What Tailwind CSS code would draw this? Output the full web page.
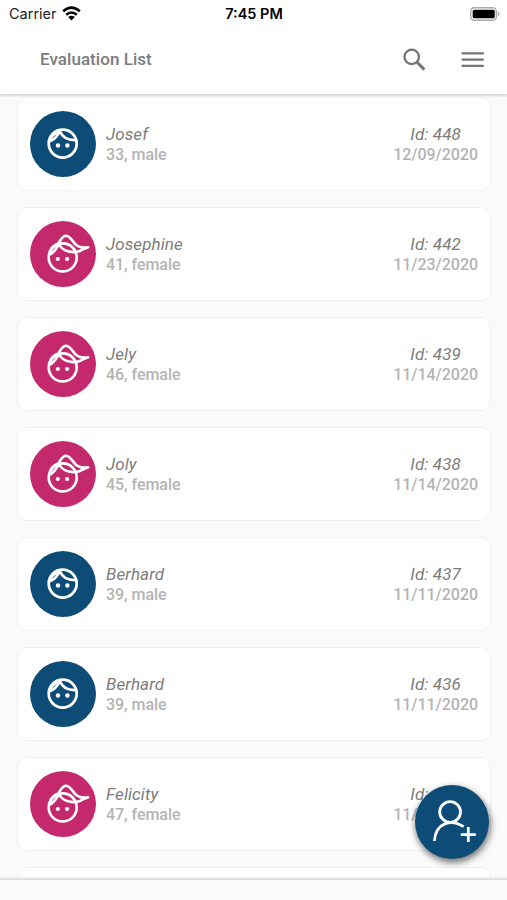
<!DOCTYPE html>
<html lang="en">

    <head>
        <title>Evaluation List</title>
        <meta charset="utf-8">
        <meta name="viewport" content="width=device-width, initial-scale=1">
        <script src="https://cdn.jsdelivr.net/npm/@tailwindcss/browser@4"></script>
    </head>

    <body class="relative flex flex-col w-full h-screen overflow-hidden bg-[#fafafa] font-['Roboto',sans-serif]">
        <!-- shared avatar artwork -->
        <svg class="hidden">
            <symbol id="male" viewBox="0 0 66 66">
                <g fill="none" stroke="#fff" stroke-width="2.7" stroke-linecap="round">
                    <circle cx="32.7" cy="32.6" r="14" />
                    <path d="M30 20.5C32.5 26.3 38.5 29.4 46 29M30 20.5C27 24 25.5 29.4 19.3 30.2" />
                    <path d="M29.5 20C25 21.8 21 25 19.5 30" />
                </g>
                <circle cx="28" cy="34.5" r="2.2" fill="#fff" />
                <circle cx="37.4" cy="34.5" r="2.2" fill="#fff" />
            </symbol>
            <symbol id="female" viewBox="0 0 66 66">
                <g fill="none" stroke="#fff" stroke-width="2.6" stroke-linecap="round" stroke-linejoin="round">
                    <circle cx="32.7" cy="36.4" r="14" />
                    <path d="M29 23C31.5 28.5 38 31.6 46 31C49.5 30.4 51.5 29.4 53 28.2L58.2 26.2C52 27.2 48.5 26.6 45 22.8C41.5 18.6 39.5 15 36 14.8C32.5 14.8 31 18.5 28.8 21.8" />
                    <path d="M28.8 22.2C23.5 24 20 28.5 19.6 33.5C24 32 26.5 27.5 29 23" />
                </g>
                <circle cx="27.8" cy="38" r="2.1" fill="#fff" />
                <circle cx="37.1" cy="38" r="2.1" fill="#fff" />
            </symbol>
        </svg>

        <header class="relative z-10 h-[94px] shrink-0 bg-white shadow-[0_1px_2px_1px_#d8d8d8]">
            <div class="grid grid-cols-3 items-center h-[27px] pl-[9px] pr-[7px] text-black font-['Inter',sans-serif]">
                <div class="flex items-center gap-[5px] text-[14.5px] text-[#222]">
                    <span>Carrier</span>
                    <svg class="w-[19px] h-[15px]" viewBox="0 0 19 15">
                        <g fill="none" stroke="#000" stroke-width="2.6">
                            <path d="M1.2 5.2Q9.5 -2 17.8 5.2" />
                            <path d="M4.2 8.7Q9.5 4.3 14.8 8.7" />
                        </g>
                        <path d="M6.2 11Q9.5 8.6 12.8 11L9.5 14.4Z" />
                    </svg>
                </div>
                <p class="pr-px text-center text-[14.5px] font-semibold whitespace-nowrap">7:45 PM</p>
                <svg class="justify-self-end w-[30px] h-[14px]" viewBox="0 0 30 14">
                    <rect x=".7" y=".7" width="25.6" height="12.6" rx="3.6" fill="#fff" stroke="#aaa" stroke-width="1.4" />
                    <rect x="2.7" y="2.7" width="22" height="8.6" rx="1.6" />
                    <path d="M27.7 4.6Q29.7 5.6 29.7 7T27.7 9.4Z" fill="#aaa" />
                </svg>
            </div>
            <div class="flex items-center h-16 pl-10 pr-[22px]">
                <h1 class="flex-1 text-[17px] leading-5 font-medium tracking-[0.05px] text-[#7c7c7c]">Evaluation List</h1>
                <svg class="w-7 h-7 mr-[32px]" viewBox="0 0 28 28" fill="none" stroke="#757575">
                    <circle cx="10.7" cy="11.9" r="7.2" stroke-width="2.3" />
                    <path d="M15.7 16.9L23.4 24.6" stroke-width="2.9" />
                </svg>
                <svg class="w-6 h-6" viewBox="0 0 24 24" fill="none" stroke="#757575" stroke-width="2.2">
                    <path d="M.6 6.4H22.8M.6 12.6H22.8M.6 18.8H22.8" />
                </svg>
            </div>
        </header>

        <main id="list" class="flex flex-col flex-1 gap-4 pl-[17px] pr-4 pt-[3px] overflow-hidden"></main>

        <footer class="relative z-10 h-5 shrink-0 bg-[#fafafa] shadow-[0_-1px_2px_1px_#dcdcdc]"></footer>

        <button class="absolute z-20 left-[415px] top-[785px] flex items-center justify-center w-[74px] h-[74px] rounded-full bg-[#0d4c77] shadow-[1px_3px_6px_1px_rgba(0,0,0,0.5)]">
            <svg class="w-full h-full" viewBox="0 0 74 74" fill="none" stroke="#fff" stroke-width="2.8">
                <circle cx="35.1" cy="27" r="10.4" />
                <path d="M19.4 56C20.5 37.5 36.5 33.7 48.6 41.6" />
                <path d="M45.8 49.6H60.8M53.3 42.1V57.1" />
            </svg>
        </button>

        <template id="row">
            <div class="flex items-center h-[94px] shrink-0 pl-3 pr-3 bg-white border border-[#f0f0f0] rounded-[10px]">
                <div class="avatar w-[66px] h-[66px] mr-[10px] rounded-full">
                    <svg class="w-full h-full"><use></use></svg>
                </div>
                <div class="flex-1 pt-0.5">
                    <p class="name text-[17px] leading-[19px] italic tracking-[0.1px] text-[#7c7c7c]"></p>
                    <p class="info text-[16px] leading-[21px] font-medium tracking-[-0.05px] text-[#b4b4b4]"></p>
                </div>
                <div class="pt-0.5 text-center">
                    <p class="code text-[17px] leading-[19px] italic tracking-[0.1px] text-[#7c7c7c]"></p>
                    <p class="date text-[16px] leading-[21px] font-medium tracking-[-0.05px] text-[#b4b4b4]"></p>
                </div>
            </div>
        </template>

        <script>
            const people = [
                ['Josef', 33, 'male', 448, '12/09/2020'],
                ['Josephine', 41, 'female', 442, '11/23/2020'],
                ['Jely', 46, 'female', 439, '11/14/2020'],
                ['Joly', 45, 'female', 438, '11/14/2020'],
                ['Berhard', 39, 'male', 437, '11/11/2020'],
                ['Berhard', 39, 'male', 436, '11/11/2020'],
                ['Felicity', 47, 'female', 435, '11/11/2020'],
            ];
            const colours = { male: 'bg-[#0d4c77]', female: 'bg-[#c4296d]' };
            const list = document.getElementById('list');

            people.forEach(([name, age, sex, id, date]) => {
                const row = document.getElementById('row').content.cloneNode(true);
                row.querySelector('.avatar').classList.add(colours[sex]);
                row.querySelector('use').setAttribute('href', '#' + sex);
                row.querySelector('.name').textContent = name;
                row.querySelector('.info').textContent = `${age}, ${sex}`;
                row.querySelector('.code').textContent = `Id: ${id}`;
                row.querySelector('.date').textContent = date;
                list.appendChild(row);
            });

            // next row, only its top edge shows above the footer
            const next = document.createElement('div');
            next.className = 'h-[94px] shrink-0 bg-white border border-[#f0f0f0] rounded-[10px]';
            list.appendChild(next);
        </script>
    </body>

</html>
